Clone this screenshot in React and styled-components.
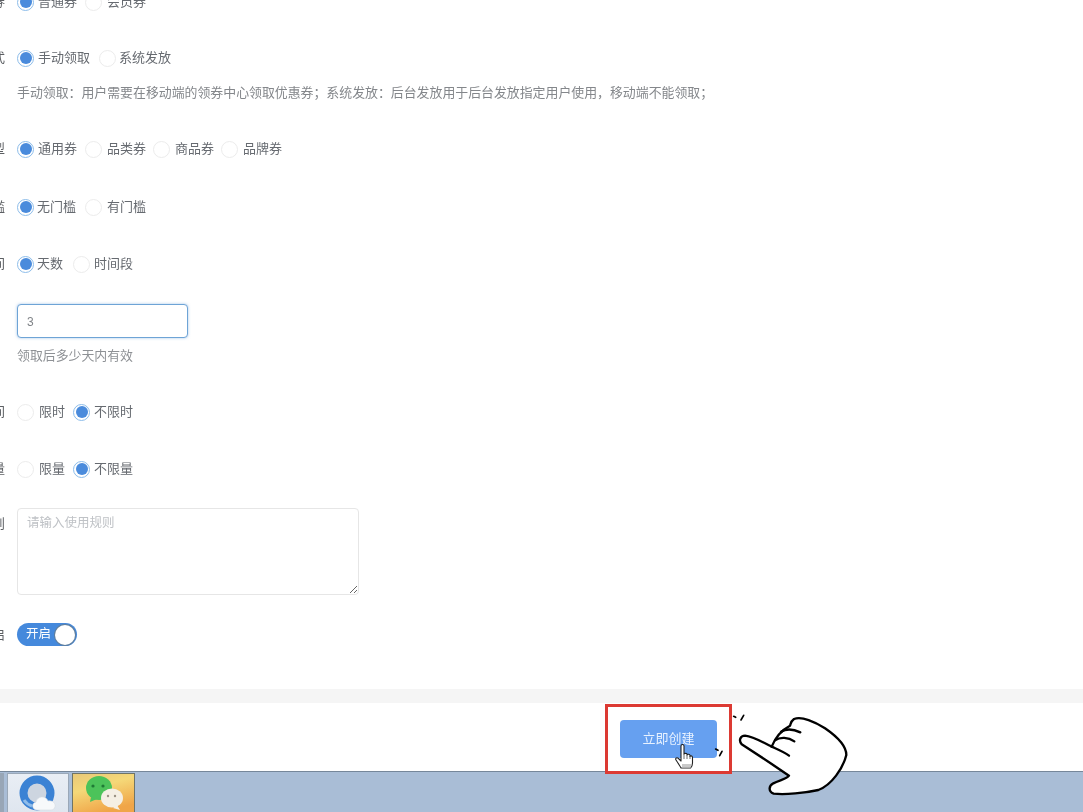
import React from "react";
import styled, { createGlobalStyle } from "styled-components";

const Global = createGlobalStyle`
  html, body { margin: 0; padding: 0; background: #fff; }
  * { box-sizing: border-box; }
`;

const Page = styled.div`
  width: 1083px;
  height: 812px;
  overflow: hidden;
  display: flex;
  flex-direction: column;
  background: #fff;
  font-family: "Liberation Sans", "Noto Sans CJK SC", sans-serif;
  font-size: 13px;
  color: #666a70;
  filter: blur(0.3px);
`;

const Form = styled.div`
  flex: 1;
  min-height: 0;
  margin-top: -12px;
  display: flex;
  flex-direction: column;
`;

const Row = styled.div`
  display: flex;
  align-items: ${(p) => p.$align || "center"};
  gap: 12px;
  min-height: ${(p) => p.$h || 28}px;
  margin-top: ${(p) => p.$mt || 0}px;
`;

const Label = styled.div`
  width: 5px;
  flex: none;
  overflow: hidden;
  display: flex;
  justify-content: flex-end;
  white-space: nowrap;
  color: #5c5f63;
  padding-top: ${(p) => p.$pt || 0}px;
  padding-bottom: ${(p) => p.$pb ?? 3}px;
`;

const Group = styled.div`
  display: flex;
  align-items: center;
`;

const RadioItem = styled.label`
  display: flex;
  align-items: center;
  gap: ${(p) => p.$gap}px;
  margin-right: ${(p) => p.$mr}px;
  line-height: 18px;
`;

const Dot = styled.span`
  flex: none;
  width: 17px;
  height: 17px;
  border-radius: 50%;
  background: #fff;
  border: 1px solid ${(p) => (p.$on ? "#8dbdea" : "#ececec")};
  display: flex;
  align-items: center;
  justify-content: center;
  &::after {
    content: "";
    display: ${(p) => (p.$on ? "block" : "none")};
    width: 12px;
    height: 12px;
    border-radius: 50%;
    background: #4a8bdc;
  }
`;

const Hint = styled.div`
  color: ${(p) => p.$c || "#84878b"};
  font-size: 12.9px;
  line-height: 20px;
  padding-top: 1px;
  white-space: nowrap;
`;

const TextInput = styled.input`
  width: 171px;
  height: 34px;
  border: 1px solid #6ea4d6;
  border-radius: 4px;
  box-shadow: 0 0 3px rgba(90, 150, 215, 0.55);
  padding: 2px 9px 0;
  font: inherit;
  font-size: 12px;
  color: #808488;
  outline: none;
  background: #fff;
`;

const Rules = styled.textarea`
  width: 342px;
  height: 87px;
  border: 1px solid #e6e6e6;
  border-radius: 4px;
  padding: 5px 9px;
  font: inherit;
  font-size: 12.5px;
  line-height: 18px;
  outline: none;
  background: #fff;
  &::placeholder { color: #bfc2c6; opacity: 1; }
`;

const Toggle = styled.div`
  width: 60px;
  height: 23px;
  border-radius: 12px;
  background: #4589dc;
  color: #fff;
  display: flex;
  align-items: center;
  justify-content: space-between;
  padding: 0 2px 0 9px;
  font-size: 12.5px;
  line-height: 21px;
  &::after {
    content: "";
    width: 20px;
    height: 20px;
    border-radius: 50%;
    background: #fff;
    box-shadow: 0 0 0 1px #5f7f9f;
  }
`;

const Band = styled.div`
  height: 14px;
  flex: none;
  background: #f5f5f5;
`;

const Footer = styled.div`
  position: relative;
  height: 68px;
  flex: none;
  display: flex;
  justify-content: flex-start;
  align-items: flex-start;
  padding: 17px 0 0 620px;
  background: #fff;
`;

const CreateButton = styled.button`
  width: 97px;
  height: 38px;
  border: none;
  border-radius: 4px;
  background: #66a0f0;
  color: #e8f2ff;
  font: inherit;
  font-size: 13px;
  padding: 0 0 3px;
`;

const Highlight = styled.div`
  position: absolute;
  left: 605px;
  top: 1px;
  width: 127px;
  height: 70px;
  border: 3px solid #dc3a33;
  z-index: 2;
`;

const Cursor = styled.svg`
  position: absolute;
  left: 674px;
  top: 41px;
  z-index: 3;
`;

const BigHand = styled.svg`
  position: absolute;
  left: 725px;
  top: 2px;
  overflow: visible;
  z-index: 3;
`;

const Taskbar = styled.div`
  height: 41px;
  flex: none;
  display: flex;
  align-items: stretch;
  gap: 3px;
  padding-top: 1px;
  background: #a9bdd6;
  border-top: 1px solid #76879a;
`;

const Sliver = styled.div`
  width: 4px;
  background: #98a6b6;
`;

const Tile = styled.div`
  width: ${(p) => p.$w}px;
  background: ${(p) => p.$bg};
  border: 1px solid ${(p) => p.$line};
  border-bottom: none;
  display: flex;
`;

const Choices = ({ items, active, gaps, margins }) => (
  <Group>
    {items.map((t, i) => (
      <RadioItem key={t} $gap={gaps[i]} $mr={margins[i]}>
        <Dot $on={i === active} />
        <span>{t}</span>
      </RadioItem>
    ))}
  </Group>
);

const BrowserIcon = () => (
  <svg width="60" height="39" viewBox="0 0 60 39">
    <circle cx="29" cy="19" r="13.5" fill="#cdd5e0" stroke="#3b82d4" strokeWidth="8" />
    <path d="M16 26a15 15 0 0 0 8 6" stroke="#8fbcea" strokeWidth="3" fill="none" />
    <path d="M29 36c-5 0-6-7-1-8 1-6 10-7 12-1 5-1 8 3 7 6-1 2-2 3-4 3z" fill="#f7f9fb" stroke="#d5dbe2" strokeWidth="0.6" />
  </svg>
);

const ChatIcon = () => (
  <svg width="61" height="39" viewBox="0 0 61 39">
    <ellipse cx="26" cy="14" rx="13" ry="12" fill="#4cc35a" />
    <path d="M18 23l-1 5 7-3z" fill="#4cc35a" />
    <circle cx="20" cy="12" r="1.6" fill="#1f7a35" />
    <circle cx="30" cy="12" r="1.6" fill="#1f7a35" />
    <ellipse cx="39" cy="24" rx="11" ry="9.500" fill="#f5efe4" />
    <path d="M44 31l3 5-7-2z" fill="#f5efe4" />
    <circle cx="35" cy="22" r="1.2" fill="#9a9184" />
    <circle cx="42" cy="22" r="1.2" fill="#9a9184" />
  </svg>
);

export default function App() {
  return (
    <Page>
      <Global />
      <Form>
        <Row>
          <Label>优惠券</Label>
          <Choices items={["普通券", "会员券"]} active={0} gaps={[4, 5]} margins={[8, 7]} />
        </Row>
        <Row $mt={28}>
          <Label>领取方式</Label>
          <Choices items={["手动领取", "系统发放"]} active={0} gaps={[4, 3]} margins={[9, 0]} />
        </Row>
        <Row $h={20} $mt={10}>
          <Label />
          <Hint>手动领取：用户需要在移动端的领券中心领取优惠券；系统发放：后台发放用于后台发放指定用户使用，移动端不能领取；</Hint>
        </Row>
        <Row $mt={32}>
          <Label>优惠券类型</Label>
          <Choices
            items={["通用券", "品类券", "商品券", "品牌券"]}
            active={0}
            gaps={[4, 5, 5, 5]}
            margins={[8, 7, 7, 0]}
          />
        </Row>
        <Row $mt={30}>
          <Label>有无门槛</Label>
          <Choices items={["无门槛", "有门槛"]} active={0} gaps={[3, 5]} margins={[9, 0]} />
        </Row>
        <Row $mt={29}>
          <Label>有效期间</Label>
          <Choices items={["天数", "时间段"]} active={0} gaps={[3, 4]} margins={[10, 0]} />
        </Row>
        <Row $h={34} $mt={26}>
          <Label />
          <TextInput defaultValue="3" />
        </Row>
        <Row $h={20} $mt={7}>
          <Label />
          <Hint $c="#8e9195">领取后多少天内有效</Hint>
        </Row>
        <Row $mt={32}>
          <Label>领取时间</Label>
          <Choices items={["限时", "不限时"]} active={1} gaps={[5, 4]} margins={[8, 0]} />
        </Row>
        <Row $mt={29}>
          <Label>发放数量</Label>
          <Choices items={["限量", "不限量"]} active={1} gaps={[5, 4]} margins={[8, 0]} />
        </Row>
        <Row $align="flex-start" $h={87} $mt={25}>
          <Label $pt={5}>使用规则</Label>
          <Rules placeholder="请输入使用规则" />
        </Row>
        <Row $h={23} $mt={28}>
          <Label>是否开启</Label>
          <Toggle>开启</Toggle>
        </Row>
      </Form>
      <Band />
      <Footer>
        <CreateButton>立即创建</CreateButton>
        <Highlight />
        <Cursor width="20" height="25" viewBox="0 0 20 25">
          <path
            d="M7 2c0-2 3-2 3 0v8c0-1 3-1 3 0v1c0-1 3-1 3 .5v1c0-1 2.500-1 2.500 1V19c0 2-1 4-2 5H7c-1-2-3-5-5-8-1-2 1-3 2.500-1.500L7 17z"
            fill="#fff"
            stroke="#222"
            strokeWidth="1.1"
            strokeLinejoin="round"
          />
          <path d="M8 20h9v3.500H8z" fill="#c9c9c9" />
          <path d="M10 10v5M13 11v4M16 12v3" stroke="#444" strokeWidth="0.8" />
        </Cursor>
        <BigHand width="130" height="100" viewBox="0 0 390 300">
          <path
            d="M60 92C46 92 40 106 50 118L130 170L192 212C185 222 165 225 145 235C130 243 130 260 146 266C180 270 240 264 280 255C320 240 354 190 364 150C364 120 332 92 300 70C270 50 230 33 207 42C196 50 197 58 195 62C170 75 150 100 140 125C115 112 85 95 60 92Z"
            fill="#fff"
            stroke="#000"
            strokeWidth="7"
            strokeLinejoin="round"
          />
          <path
            d="M168 80C185 70 205 72 226 82M150 106C165 95 190 96 208 109M140 125C155 132 175 140 192 152"
            fill="none"
            stroke="#000"
            strokeWidth="7"
            strokeLinecap="round"
          />
          <path d="M26 34l6 3M48 45l8-14" stroke="#000" strokeWidth="5" strokeLinecap="round" />
          <path d="M-28 132l7 4M-16 152l7-13" stroke="#000" strokeWidth="5" strokeLinecap="round" />
        </BigHand>
      </Footer>
      <Taskbar>
        <Sliver />
        <Tile $w={62} $bg="linear-gradient(#e9eef5, #dfe6ef)" $line="#9aa8b8">
          <BrowserIcon />
        </Tile>
        <Tile $w={63} $bg="linear-gradient(165deg, #e8c878, #f5d878 35%, #f0a548 85%)" $line="#6f7466">
          <ChatIcon />
        </Tile>
      </Taskbar>
    </Page>
  );
}
